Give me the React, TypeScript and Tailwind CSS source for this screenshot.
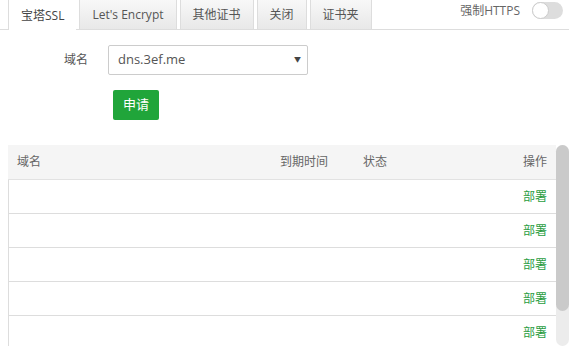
import React, {useState} from 'react';

const tabs = ["宝塔SSL", "Let's Encrypt", "其他证书", "关闭", "证书夹"]

const rows = [1, 2, 3, 4, 5]

const App = () => {
    const [active, setActive] = useState(0)
    const [domain, setDomain] = useState("dns.3ef.me")
    const [forceHttps, setForceHttps] = useState(false)

    return (
        <div className="w-[569px] h-[346px] overflow-hidden bg-white text-[12px] text-[#555] font-['Open_Sans','Noto_Sans_CJK_SC',sans-serif]">
            <div className="flex flex-row justify-between items-start border-b border-[#ddd] h-[30px] pl-[8px] pr-[6px]">
                <div className="flex flex-row gap-[2px] h-[30px]">
                    {tabs.map((tab, i) => (
                        <button key={tab} onClick={() => setActive(i)}
                                className={`${active === i ? "bg-white h-[30px] text-[#444]" : "bg-gradient-to-b from-[#f8f8f8] to-[#e8e8e8] h-[29px] border-r text-[#555]"} border-l border-[#ddd] px-[12px] leading-[29px] mr-[1px]`}>
                            {tab}
                        </button>
                    ))}
                </div>
                <div className="flex flex-row items-center gap-[12px] h-[21px]">
                    <span className="text-[#666]">强制HTTPS</span>
                    <button onClick={() => setForceHttps(!forceHttps)}
                            className={`${forceHttps ? "bg-[#20a53a]" : "bg-[#dddddd]"} relative w-[31px] h-[17px] rounded-full`}>
                        <span className={`${forceHttps ? "left-[14px]" : "left-0"} absolute top-0 w-[17px] h-[17px] rounded-full bg-white border border-[#ccc]`}/>
                    </button>
                </div>
            </div>

            <div className="flex flex-row items-center mt-[15px]">
                <span className="w-[88px] text-right text-[#555]">域名</span>
                <div className="relative ml-[20px] w-[200px] h-[30px]">
                    <select value={domain} onChange={(e) => setDomain(e.target.value)}
                            className="appearance-none w-full h-full border border-[#ccc] rounded-[2px] pl-[9px] text-[13px] text-[#555] bg-white outline-none">
                        <option>dns.3ef.me</option>
                    </select>
                    <span className="pointer-events-none absolute right-[7px] top-[10px] text-[7px] text-[#444]">▼</span>
                </div>
            </div>

            <button className="ml-[113px] mt-[15px] w-[46px] h-[30px] rounded-[2px] bg-[#20a53a] text-white text-[13px]">申请</button>

            <div className="ml-[8px] mt-[25px] h-[201px] flex flex-row">
                <div className="flex-1 overflow-hidden">
                    <div className="grid grid-cols-[263px_83px_1fr_auto] h-[35px] items-center bg-[#f5f5f5] border-b border-[#e2e2e2] text-[#666]">
                        <span className="pl-[9px]">域名</span>
                        <span className="pl-[9px]">到期时间</span>
                        <span className="pl-[9px]">状态</span>
                        <span className="pr-[9px] text-right">操作</span>
                    </div>
                    {rows.map((row) => (
                        <div key={row} className="grid grid-cols-[263px_83px_1fr_auto] h-[34px] items-center border-l border-b border-[#ddd]">
                            <span/>
                            <span/>
                            <span/>
                            <a className="pr-[9px] text-right text-[#2a9d3f] cursor-pointer">部署</a>
                        </div>
                    ))}
                </div>
                <div className="w-[13px] h-full rounded-full bg-[#ececec] flex flex-col">
                    <div className="h-[166px] rounded-full bg-[#cacaca]"/>
                </div>
            </div>
        </div>
    );
};

export default App;
